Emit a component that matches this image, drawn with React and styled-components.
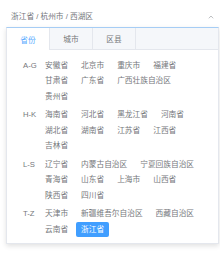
import React, { useState } from "react";
import styled, { createGlobalStyle } from "styled-components";

const GlobalStyle = createGlobalStyle`
  body {
    margin: 0;
    background: #fff;
    font-family: "Liberation Sans", "Noto Sans CJK SC", sans-serif;
  }
`;

const textColor = "#75777b";

const Wrapper = styled.div`
  width: 220px;
  height: 255px;
  box-sizing: border-box;
  padding-left: 6px;
`;

const Trigger = styled.div`
  height: 27px;
  box-sizing: border-box;
  padding: 11px 6px 0 5px;
  display: flex;
  align-items: flex-start;
  justify-content: space-between;
  font-size: 7.7px;
  line-height: 12px;
  color: ${textColor};
`;

const Arrow = styled.svg`
  margin-top: 4px;
  display: block;
`;

const Panel = styled.div`
  width: 213px;
  box-sizing: border-box;
  border: 1px solid #e4e7ed;
  border-top-color: #a6cdf5;
  background: #fff;
  box-shadow: 0 2px 5px rgba(0, 0, 0, 0.12);
`;

const TabBar = styled.div`
  display: flex;
  height: 21px;
  background: #f5f7fa;
  border-bottom: 1px solid #e4e7ed;
`;

const Tab = styled.div`
  width: 43px;
  box-sizing: border-box;
  border-right: 1px solid #e4e7ed;
  display: flex;
  align-items: center;
  justify-content: center;
  font-size: 7.7px;
  color: ${p => (p.$active ? "#5aabff" : textColor)};
  background: ${p => (p.$active ? "#fff" : "transparent")};
  margin-bottom: ${p => (p.$active ? "-1px" : "0")};
  cursor: pointer;
`;

const Body = styled.div`
  padding: 7.5px 10px 6px 0;
`;

const Group = styled.div`
  display: flex;
  margin-bottom: 3px;
  &:last-child {
    margin-bottom: 0;
  }
`;

const Label = styled.div`
  width: 33px;
  flex-shrink: 0;
  box-sizing: border-box;
  padding-left: 16px;
  font-size: 7.7px;
  line-height: 15px;
  color: ${textColor};
`;

const Items = styled.div`
  display: flex;
  flex-wrap: wrap;
  flex: 1;
`;

const Item = styled.span`
  height: 15px;
  line-height: 15px;
  padding: 0 5px;
  margin: 0 3px 0.5px 0;
  border-radius: 2px;
  font-size: 7.7px;
  white-space: nowrap;
  color: ${p => (p.$selected ? "#fff" : textColor)};
  background: ${p => (p.$selected ? "#409eff" : "transparent")};
  cursor: pointer;
`;

const groups = [
  ["A-G", ["安徽省", "北京市", "重庆市", "福建省", "甘肃省", "广东省", "广西壮族自治区", "贵州省"]],
  ["H-K", ["海南省", "河北省", "黑龙江省", "河南省", "湖北省", "湖南省", "江苏省", "江西省", "吉林省"]],
  ["L-S", ["辽宁省", "内蒙古自治区", "宁夏回族自治区", "青海省", "山东省", "上海市", "山西省", "陕西省", "四川省"]],
  ["T-Z", ["天津市", "新疆维吾尔自治区", "西藏自治区", "云南省", "浙江省"]],
];

const tabs = ["省份", "城市", "区县"];

export default function App() {
  const [tab, setTab] = useState(0);
  const [selected, setSelected] = useState("浙江省");
  return (
    <Wrapper>
      <GlobalStyle />
      <Trigger>
        <span>浙江省 / 杭州市 / 西湖区</span>
        <Arrow width="6" height="4" viewBox="0 0 6 4">
          <path d="M0.8 3.3 L3 1 L5.2 3.3" fill="none" stroke="#a0a3a8" strokeWidth="0.7" />
        </Arrow>
      </Trigger>
      <Panel>
        <TabBar>
          {tabs.map((t, i) => (
            <Tab key={t} $active={i === tab} onClick={() => setTab(i)}>
              {t}
            </Tab>
          ))}
        </TabBar>
        <Body>
          {groups.map(([label, list]) => (
            <Group key={label}>
              <Label>{label}</Label>
              <Items>
                {list.map(name => (
                  <Item key={name} $selected={name === selected} onClick={() => setSelected(name)}>
                    {name}
                  </Item>
                ))}
              </Items>
            </Group>
          ))}
        </Body>
      </Panel>
    </Wrapper>
  );
}
